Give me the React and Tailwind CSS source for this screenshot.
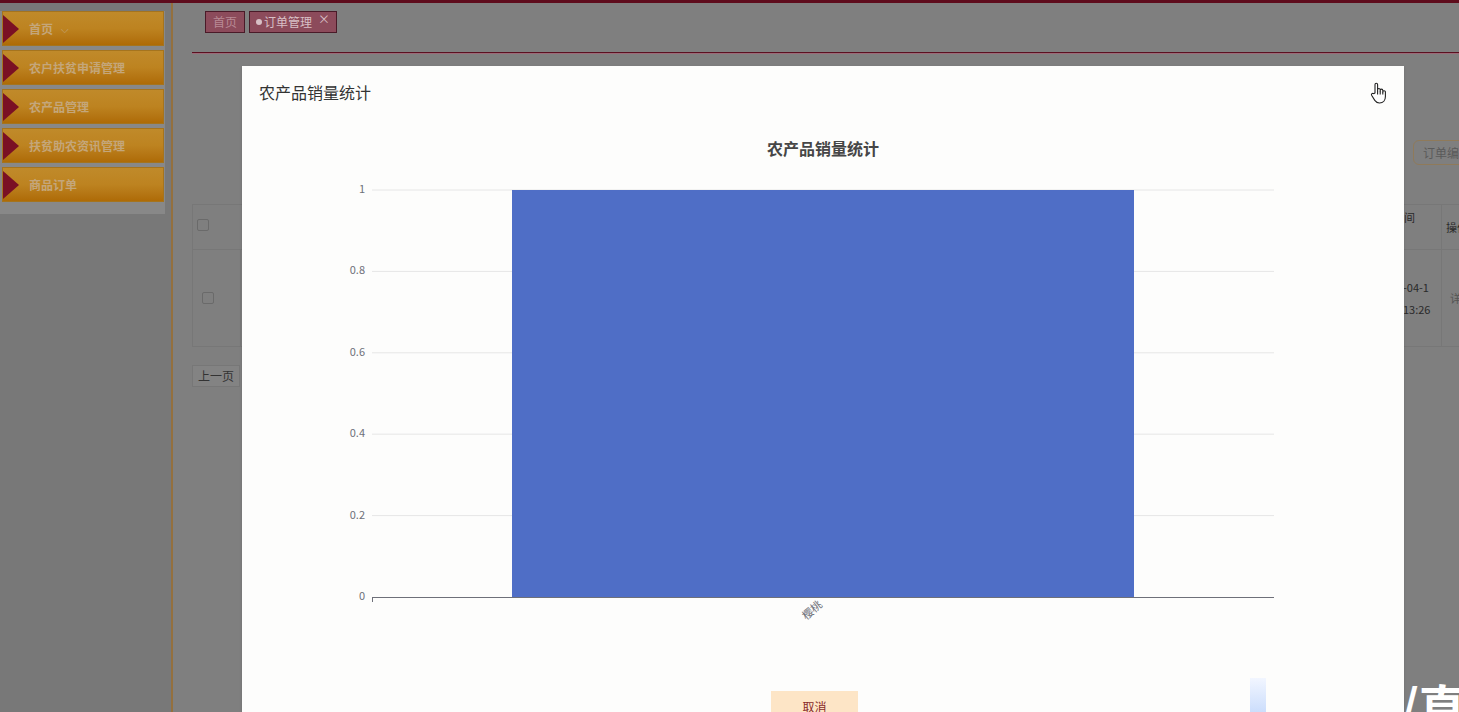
import React from 'react'

const menus = ['首页', '农户扶贫申请管理', '农产品管理', '扶贫助农资讯管理', '商品订单']

const yTicks = [
    { label: '1', y: 190 },
    { label: '0.8', y: 271.4 },
    { label: '0.6', y: 352.8 },
    { label: '0.4', y: 434.2 },
    { label: '0.2', y: 515.6 },
    { label: '0', y: 597 },
]

const SalesChart = () => {
    return (
        <svg width="1162" height="520" viewBox="242 120 1162 520" className="block mt-[2px]">
            <text x="823" y="155" textAnchor="middle" fontSize="16" fontWeight="700" fill="#464646">
                农产品销量统计
            </text>
            {yTicks.map((t) => (
                <g key={t.label}>
                    {t.label !== '0' && (
                        <line x1="372" x2="1274" y1={t.y} y2={t.y} stroke="#e6e6e6" strokeWidth="1" />
                    )}
                    <text x="365" y={t.y + 3} textAnchor="end" fontSize="11" fill="#6e7079">
                        {t.label}
                    </text>
                </g>
            ))}
            <rect x="512" y="190" width="622" height="407" fill="#4f6ec6" />
            <line x1="372" x2="1274" y1="597.5" y2="597.5" stroke="#6e7079" strokeWidth="1" />
            <line x1="372.5" x2="372.5" y1="597" y2="602" stroke="#6e7079" strokeWidth="1" />
            <text
                x="823"
                y="606"
                textAnchor="end"
                fontSize="11"
                fill="#6e7079"
                transform="rotate(-40 823 606)"
            >
                樱桃
            </text>
        </svg>
    )
}

const HandCursor = () => (
    <svg width="18" height="22" viewBox="0 0 18 22" fill="#fff" stroke="#222" strokeWidth="1.1" strokeLinejoin="round">
        <path d="M5 11V2.6a1.3 1.3 0 012.6 0V9.5V7.8a1.3 1.3 0 012.6 0v1.8V8.4a1.3 1.3 0 012.6 0v1.6a1.3 1.3 0 012.6 0v4.5c0 3.6-2.2 6.5-5.8 6.5H9.4c-2.2 0-3.5-1-4.6-2.6L1.6 13.3a1.3 1.3 0 012-1.6z" />
        <path d="M7.6 9.5v3M10.2 9.6v3M12.8 10v2.6" fill="none" />
    </svg>
)

const App = () => {
    return (
        <div
            className="relative w-[1459px] h-[712px] overflow-hidden bg-[#7f7f7f]"
            style={{ fontFamily: '"Noto Sans CJK SC", "Noto Sans", sans-serif' }}
        >
            <div className="h-[3px] bg-[#5e0c1c]" />
            <div className="flex h-[709px]">
                {/* side menu */}
                <div className="w-[173px] shrink-0 bg-[#787878] border-r-2 border-[#94703e] pt-[8px]">
                    <div className="w-[165px] bg-[#888888] pb-[8px]">
                        {menus.map((m) => (
                            <div
                                key={m}
                                className="ml-[2px] mb-[4px] h-[35px] w-[162px] flex items-center border border-[#a5741e] bg-gradient-to-b from-[#c08a2a] via-[#bd8320] to-[#ae6b06]"
                            >
                                <span className="w-0 h-0 border-y-[14px] border-y-transparent border-l-[16px] border-l-[#7a1024]" />
                                <span className="ml-[10px] text-[12px] font-bold text-[#c4a67a]">{m}</span>
                                {m === '首页' && <span className="ml-[8px] text-[10px] text-[#c4a67a]">⌵</span>}
                            </div>
                        ))}
                    </div>
                </div>

                {/* main content behind the dialog */}
                <div className="relative flex-1 pl-[19px]">
                    <div className="flex gap-[4px] pt-[8px] pl-[13px]">
                        <div className="h-[22px] px-[7px] flex items-center border border-[#4a1a28] bg-[#8c4b5b] text-[12px] text-[#b98a95]">
                            首页
                        </div>
                        <div className="relative h-[22px] pl-[6px] pr-[24px] flex items-center gap-[2px] border border-[#4a1a28] bg-[#8c4b5b] text-[12px] text-[#d8c0c6]">
                            <span className="w-[6px] h-[6px] rounded-full bg-[#d8c0c6]" />
                            订单管理
                            <span className="absolute right-[6px] top-[-2px] text-[12px] text-[#d8c0c6]">×</span>
                        </div>
                    </div>
                    <div className="mt-[19px] h-[2px] bg-[#5a1020] border-b border-[#9a6a78]" />

                    <div className="mt-[86px] ml-[1221px] h-[25px] w-[80px] rounded-l-[6px] border border-[#8f7a5a] pl-[9px] text-[12px] leading-[23px] text-[#5a5a5a] whitespace-nowrap">
                        订单编号
                    </div>

                    <div className="mt-[39px] border border-[#777] w-[1310px]">
                        <div className="flex h-[45px] border-b border-[#777]">
                            <div className="w-[48px] flex items-start pt-[14px] pl-[4px]">
                                <span className="w-[12px] h-[12px] border border-[#6a6a6a] rounded-[2px]" />
                            </div>
                            <div className="flex-1" />
                            <div className="w-[50px] pt-[4px] pl-[2px] text-[11px] text-[#2a2a2a] whitespace-nowrap">时间</div>
                            <div className="w-[60px] border-l border-[#777] flex items-center pl-[4px] text-[11px] text-[#2a2a2a] whitespace-nowrap">操作</div>
                        </div>
                        <div className="flex h-[96px]">
                            <div className="w-[48px] border-r border-[#777] flex items-center pl-[9px]">
                                <span className="w-[12px] h-[12px] border border-[#6a6a6a] rounded-[2px]" />
                            </div>
                            <div className="flex-1" />
                            <div className="w-[50px] flex flex-col justify-center gap-[5px] pl-[12px] text-[11px] text-[#2a2a2a]">
                                <span>-04-1</span>
                                <span>13:26</span>
                            </div>
                            <div className="w-[60px] border-l border-[#777] flex items-center pl-[8px] text-[11px] text-[#555]">详</div>
                        </div>
                    </div>

                    <div className="mt-[18px] inline-block h-[22px] px-[5px] border border-[#777] bg-[#838383] text-[12px] leading-[20px] text-[#333]">
                        上一页
                    </div>
                </div>
            </div>

            {/* dialog */}
            <div className="absolute left-[242px] top-[66px] w-[1162px] h-[660px] bg-[#fdfdfc] shadow">
                <div className="flex items-center justify-between h-[52px] pl-[17px] pr-[16px]">
                    <span className="text-[16px] text-[#333]">农产品销量统计</span>
                    <span className="mt-[2px]">
                        <HandCursor />
                    </span>
                </div>
                <SalesChart />
                <div className="flex pt-[51px] pl-[529px]">
                    <button className="w-[87px] h-[32px] bg-[#fde5c6] text-[12px] text-[#8a2a2a]">取消</button>
                </div>
            </div>

            {/* watermark peeking at the bottom right */}
            <div className="absolute left-[1250px] top-[678px] w-[16px] h-[40px] bg-gradient-to-b from-[#f2f6ff] to-[#c5d9fb]" />
            <div className="absolute left-[1400px] top-[680px] text-[48px] leading-none font-bold text-white whitespace-nowrap">/直</div>
        </div>
    )
}

export default App
